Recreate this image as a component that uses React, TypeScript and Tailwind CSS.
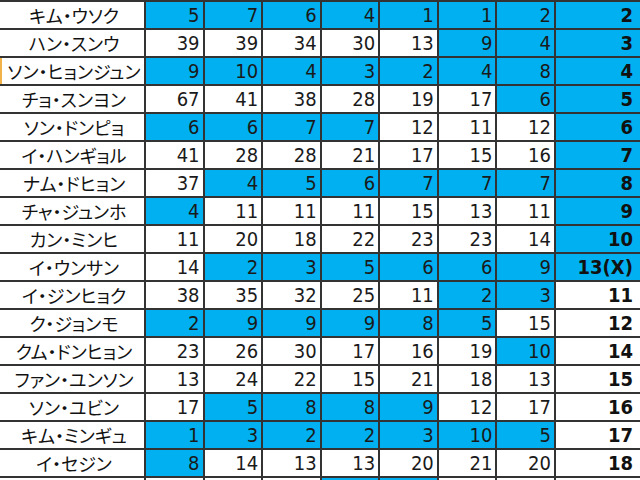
import { Fragment } from "react";

type Row = { name: string; vals: number[]; blue: number[]; rank: string; rankBlue: boolean };

const rows: Row[] = [
  { name: "キム・ウソク", vals: [5, 7, 6, 4, 1, 1, 2], blue: [0, 1, 2, 3, 4, 5, 6], rank: "2", rankBlue: true },
  { name: "ハン・スンウ", vals: [39, 39, 34, 30, 13, 9, 4], blue: [5, 6], rank: "3", rankBlue: true },
  { name: "ソン・ヒョンジュン", vals: [9, 10, 4, 3, 2, 4, 8], blue: [0, 1, 2, 3, 4, 5, 6], rank: "4", rankBlue: true },
  { name: "チョ・スンヨン", vals: [67, 41, 38, 28, 19, 17, 6], blue: [6], rank: "5", rankBlue: true },
  { name: "ソン・ドンピョ", vals: [6, 6, 7, 7, 12, 11, 12], blue: [0, 1, 2, 3], rank: "6", rankBlue: true },
  { name: "イ・ハンギョル", vals: [41, 28, 28, 21, 17, 15, 16], blue: [], rank: "7", rankBlue: true },
  { name: "ナム・ドヒョン", vals: [37, 4, 5, 6, 7, 7, 7], blue: [1, 2, 3, 4, 5, 6], rank: "8", rankBlue: true },
  { name: "チャ・ジュンホ", vals: [4, 11, 11, 11, 15, 13, 11], blue: [0], rank: "9", rankBlue: true },
  { name: "カン・ミンヒ", vals: [11, 20, 18, 22, 23, 23, 14], blue: [], rank: "10", rankBlue: true },
  { name: "イ・ウンサン", vals: [14, 2, 3, 5, 6, 6, 9], blue: [1, 2, 3, 4, 5, 6], rank: "13(X)", rankBlue: true },
  { name: "イ・ジンヒョク", vals: [38, 35, 32, 25, 11, 2, 3], blue: [5, 6], rank: "11", rankBlue: false },
  { name: "ク・ジョンモ", vals: [2, 9, 9, 9, 8, 5, 15], blue: [0, 1, 2, 3, 4, 5], rank: "12", rankBlue: false },
  { name: "クム・ドンヒョン", vals: [23, 26, 30, 17, 16, 19, 10], blue: [6], rank: "14", rankBlue: false },
  { name: "ファン・ユンソン", vals: [13, 24, 22, 15, 21, 18, 13], blue: [], rank: "15", rankBlue: false },
  { name: "ソン・ユビン", vals: [17, 5, 8, 8, 9, 12, 17], blue: [1, 2, 3, 4], rank: "16", rankBlue: false },
  { name: "キム・ミンギュ", vals: [1, 3, 2, 2, 3, 10, 5], blue: [0, 1, 2, 3, 4, 5, 6], rank: "17", rankBlue: false },
  { name: "イ・セジン", vals: [8, 14, 13, 13, 20, 21, 20], blue: [0], rank: "18", rankBlue: false },
];

// partly visible row below the last name
const lastBlue = [3, 4];

const numFont = { fontFamily: '"DejaVu Sans Condensed", "DejaVu Sans", sans-serif' };
const jpFont = { fontFamily: '"Noto Sans CJK JP", "Noto Sans", sans-serif', fontFeatureSettings: '"palt"' };

export default function App() {
  return (
    <div className="w-[640px] h-[480px] overflow-hidden bg-white">
      <div className="grid grid-cols-[144px_repeat(7,56.57px)_90px] auto-rows-[26px] gap-[2px] pt-[2px] bg-[#333333] w-[700px]">
        {rows.map((r, i) => (
          <Fragment key={i}>
            <div
              className={`bg-white flex items-center justify-center pl-1 text-[18px] text-[#111] leading-none ${i === 2 ? "shadow-[inset_2px_0_0_#f2b24a]" : ""}`}
              style={jpFont}
            >
              {r.name}
            </div>
            {r.vals.map((v, j) => (
              <div
                key={j}
                className={`flex items-center justify-end pr-[3px] text-[20px] text-[#1a1a1a] leading-none font-stretch-condensed ${r.blue.includes(j) ? "bg-[#00b0f0]" : "bg-white"}`}
                style={numFont}
              >
                {v}
              </div>
            ))}
            <div
              className={`flex items-center justify-end pr-[13px] text-[20px] font-bold text-[#111] leading-none font-stretch-condensed ${r.rankBlue ? "bg-[#00b0f0]" : "bg-white"}`}
              style={numFont}
            >
              {r.rank}
            </div>
          </Fragment>
        ))}
        <div className="bg-white" />
        {[0, 1, 2, 3, 4, 5, 6].map((j) => (
          <div key={j} className={lastBlue.includes(j) ? "bg-[#00b0f0]" : "bg-white"} />
        ))}
        <div className="bg-white" />
      </div>
    </div>
  );
}
